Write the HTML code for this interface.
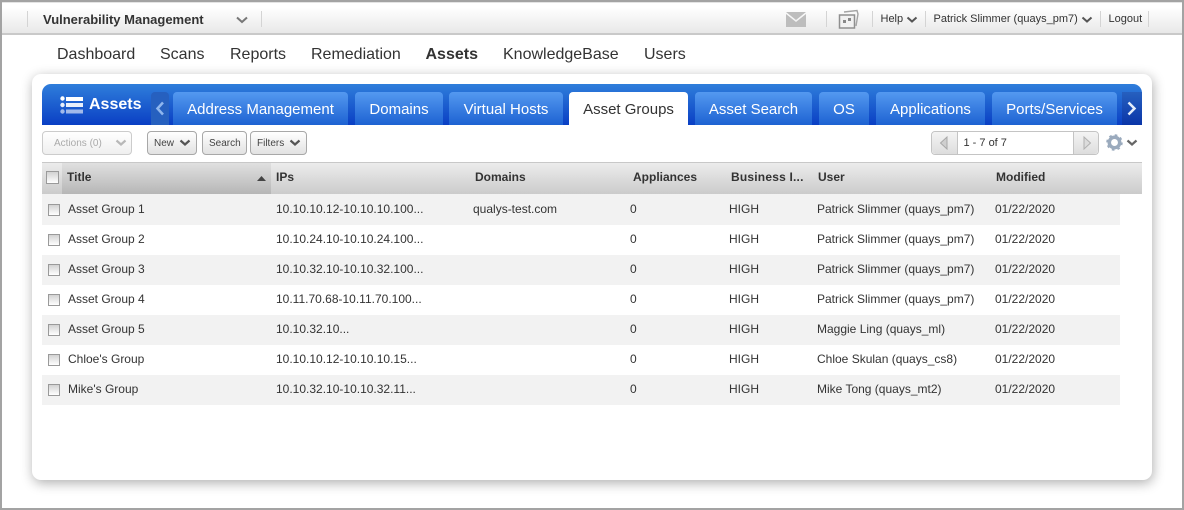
<!DOCTYPE html>
<html><head><meta charset="utf-8"><style>
html,body{margin:0;padding:0;background:#fff}
#p{position:relative;width:1184px;height:510px;overflow:hidden;background:#fff;font-family:"Liberation Sans",sans-serif;color:#333}
#p div{position:absolute;white-space:nowrap}
.frame{left:0;top:0;width:1180px;height:506px;border:2px solid #a3a3a3;z-index:9;pointer-events:none}
.top{left:2px;top:2px;width:1180px;height:31px;background:linear-gradient(#fff,#fff 15%,#e8e8e8);border-top:1px solid #e4e4e4;box-sizing:border-box}
.topb{left:2px;top:33px;width:1180px;height:2px;background:#c9c9c9}
.sep{width:1px;height:16px;top:11px;background:#d4d4d4}
.t11{font-size:11px;top:13px;color:#333;line-height:13px}
.nav{font-size:16px;top:45px;line-height:19px;color:#333}
.card{left:32px;top:74px;width:1120px;height:406px;background:#fff;border-radius:9px;box-shadow:1px 3px 12px rgba(0,0,0,.32)}
.bar{left:42px;top:84px;width:1100px;height:41px;background:linear-gradient(#2f7edb,#0a3fc4);border-radius:9px 9px 0 0}
.tab{top:92px;height:33px;background:linear-gradient(#5499f0,#1d62d2);border-radius:4px 4px 0 0;color:#fff;font-size:15px;line-height:35px;text-align:center}
.tab.on{background:#fff;color:#333}
.btn{top:131px;height:22px;border:1px solid #a8a8a8;border-radius:4px;background:linear-gradient(#fff,#e2e2e2);font-size:10px;line-height:24px;color:#444}
.hd{left:42px;top:162px;width:1100px;height:32px;background:linear-gradient(#ececec,#cbcbcb);border-top:1px solid #c8c8c8;box-sizing:border-box}
.sorted{left:62px;top:163px;width:209px;height:31px;background:linear-gradient(#e0e0e0,#b6b6b6)}
.h{top:170px;font-size:12px;font-weight:bold;line-height:14px;color:#333}
.row{left:42px;width:1078px;height:30px}
.c{font-size:12px;line-height:14px;color:#333}
.cb{left:48px;width:10px;height:10px;border:1px solid #9a9a9a;background:linear-gradient(#d2d2d2,#fff)}
</style></head><body><div id="p">
<div class="top"></div>
<div class="topb"></div>
<div class="sep" style="left:27px"></div>
<div class="sep" style="left:261px"></div>
<div style="left:43px;top:12px;font-size:13px;font-weight:bold;line-height:15px;color:#333">Vulnerability Management</div>
<svg style="position:absolute;left:236px;top:16px" width="12" height="8"><path d="M1 1.500L6 6L11 1.500" fill="none" stroke="#777" stroke-width="2"/></svg>
<svg style="position:absolute;left:786px;top:12px" width="20" height="15"><path d="M0 0H20L10 8Z" fill="#bdbdbd"/><path d="M0 2L10 10L20 2V15H0Z" fill="#bdbdbd"/></svg>
<div class="sep" style="left:826px"></div>
<svg style="position:absolute;left:838px;top:9px" width="21" height="20"><path d="M6 3L19 1.500L20 5L18 17" fill="none" stroke="#a5a5a5" stroke-width="1.400"/><rect x="1.500" y="6" width="15" height="13" fill="#f1f1f1" stroke="#8f8f8f" stroke-width="1.500"/><path d="M5 11h3v3H5zM10 9h3v3h-3z" fill="#888"/></svg>
<div class="sep" style="left:872px"></div>
<div class="t11" style="left:880.500px">Help</div>
<svg style="position:absolute;left:906px;top:16px" width="12" height="8"><path d="M1.500 1.500L6 5.500L10.500 1.500" fill="none" stroke="#555" stroke-width="2"/></svg>
<div class="sep" style="left:925px"></div>
<div class="t11" style="left:933.500px">Patrick Slimmer (quays_pm7)</div>
<svg style="position:absolute;left:1081px;top:16px" width="12" height="8"><path d="M1.500 1.500L6 5.500L10.500 1.500" fill="none" stroke="#555" stroke-width="2"/></svg>
<div class="sep" style="left:1100px"></div>
<div class="t11" style="left:1108.500px">Logout</div>
<div class="sep" style="left:1148px"></div>

<div class="nav" style="left:57px">Dashboard</div>
<div class="nav" style="left:160px">Scans</div>
<div class="nav" style="left:230px">Reports</div>
<div class="nav" style="left:311px">Remediation</div>
<div class="nav" style="left:425.500px;font-weight:bold">Assets</div>
<div class="nav" style="left:503px">KnowledgeBase</div>
<div class="nav" style="left:644px">Users</div>

<div class="card"></div>
<div class="bar"></div>
<svg style="position:absolute;left:60px;top:96px" width="24" height="20"><g fill="#fff"><circle cx="2.500" cy="2.500" r="2.200"/><circle cx="2.500" cy="9" r="2.200" opacity=".9"/><circle cx="2.500" cy="15.500" r="2.200" opacity=".6"/><rect x="6" y="1" width="17" height="4"/><rect x="6" y="7" width="17" height="4" opacity=".9"/><rect x="6" y="13.500" width="17" height="4" opacity=".6"/></g></svg>
<div style="left:89px;top:95px;color:#fff;font-size:16px;font-weight:bold;line-height:19px">Assets</div>
<div style="left:151px;top:92px;width:18px;height:33px;background:#2660bf;border-radius:4px 4px 0 0"></div>
<svg style="position:absolute;left:155px;top:101px" width="10" height="15"><path d="M8 1.500L2.500 7.500L8 13.500" fill="none" stroke="#8fb6ee" stroke-width="2.500"/></svg>
<div class="tab" style="left:173px;width:175px">Address Management</div>
<div class="tab" style="left:355px;width:88px">Domains</div>
<div class="tab" style="left:449px;width:114px">Virtual Hosts</div>
<div class="tab on" style="left:569px;width:119px">Asset Groups</div>
<div class="tab" style="left:695px;width:117px">Asset Search</div>
<div class="tab" style="left:819px;width:50px">OS</div>
<div class="tab" style="left:876px;width:109px">Applications</div>
<div class="tab" style="left:992px;width:125px">Ports/Services</div>
<div style="left:1122px;top:92px;width:20px;height:33px;background:linear-gradient(#2660bf,#0a35a8)"></div>
<svg style="position:absolute;left:1126px;top:101px" width="11" height="15"><path d="M2.500 1.500L8.500 7.500L2.500 13.500" fill="none" stroke="#e4edfa" stroke-width="2.500"/></svg>

<div class="btn" style="left:42px;width:88px;border-color:#ccc;color:#aaa;background:linear-gradient(#fff,#efefef)"><span style="margin-left:11px">Actions (0)</span></div>
<svg style="position:absolute;left:115px;top:139px" width="12" height="8"><path d="M1.500 1.500L6 5.500L10.500 1.500" fill="none" stroke="#b8b8b8" stroke-width="2.200"/></svg>
<div class="btn" style="left:147px;width:48px"><span style="margin-left:6px">New</span></div>
<svg style="position:absolute;left:179px;top:139px" width="12" height="8"><path d="M1.500 1.500L6 5.500L10.500 1.500" fill="none" stroke="#555" stroke-width="2.200"/></svg>
<div class="btn" style="left:202px;width:43px"><span style="margin-left:6px">Search</span></div>
<div class="btn" style="left:250px;width:55px"><span style="margin-left:6px">Filters</span></div>
<svg style="position:absolute;left:289px;top:139px" width="12" height="8"><path d="M1.500 1.500L6 5.500L10.500 1.500" fill="none" stroke="#555" stroke-width="2.200"/></svg>

<div style="left:931px;top:131px;width:166px;height:22px;border:1px solid #c4c4c4;border-radius:4px;background:#fff"></div>
<div style="left:932px;top:132px;width:25px;height:22px;background:linear-gradient(#f4f4f4,#ddd);border-right:1px solid #c4c4c4;border-radius:4px 0 0 4px"></div>
<div style="left:1073px;top:132px;width:24px;height:22px;background:linear-gradient(#f4f4f4,#ddd);border-left:1px solid #c4c4c4;border-radius:0 4px 4px 0"></div>
<svg style="position:absolute;left:939px;top:136px" width="10" height="14"><path d="M8 1V13L1.500 7Z" fill="#cfcfcf" stroke="#a8a8a8"/></svg>
<svg style="position:absolute;left:1082px;top:136px" width="10" height="14"><path d="M2 1V13L8.500 7Z" fill="#dcdcdc" stroke="#b0b0b0"/></svg>
<div style="left:963.500px;top:137px;font-size:11px;line-height:13px;color:#333">1 - 7 of 7</div>
<svg style="position:absolute;left:1106px;top:134px" width="17" height="17"><circle cx="8.500" cy="8.500" r="5.200" fill="none" stroke="#9aaabd" stroke-width="3.500"/><circle cx="8.500" cy="8.500" r="7" fill="none" stroke="#9aaabd" stroke-width="2.500" stroke-dasharray="2.500 3"/></svg>
<svg style="position:absolute;left:1126px;top:139px" width="12" height="8"><path d="M1.500 1.500L6 5.500L10.500 1.500" fill="none" stroke="#666" stroke-width="2.200"/></svg>

<div class="hd"></div>
<div class="sorted"></div>
<div class="cb" style="top:171px;left:46px;width:11px;height:11px"></div>
<div class="h" style="left:67px">Title</div>
<svg style="position:absolute;left:256px;top:175px" width="12" height="7"><path d="M1 6L5.500 1L10 6Z" fill="#444"/></svg>
<div class="h" style="left:276px">IPs</div>
<div class="h" style="left:475px">Domains</div>
<div class="h" style="left:633px">Appliances</div>
<div class="h" style="left:731px;letter-spacing:.2px">Business I...</div>
<div class="h" style="left:818px">User</div>
<div class="h" style="left:996px">Modified</div>

<div class="row" style="top:194px;height:31px;background:#f2f2f2"></div>
<div class="row" style="top:255px;background:#f2f2f2"></div>
<div class="row" style="top:315px;background:#f2f2f2"></div>
<div class="row" style="top:375px;background:#f2f2f2"></div>

<div class="cb" style="top:204px"></div><div class="c" style="left:68px;top:202px">Asset Group 1</div><div class="c" style="left:276px;top:202px">10.10.10.12-10.10.10.100...</div><div class="c" style="left:473px;top:202px">qualys-test.com</div><div class="c" style="left:630px;top:202px">0</div><div class="c" style="left:729px;top:202px">HIGH</div><div class="c" style="left:817px;top:202px">Patrick Slimmer (quays_pm7)</div><div class="c" style="left:995px;top:202px">01/22/2020</div>
<div class="cb" style="top:234px"></div><div class="c" style="left:68px;top:232px">Asset Group 2</div><div class="c" style="left:276px;top:232px">10.10.24.10-10.10.24.100...</div><div class="c" style="left:630px;top:232px">0</div><div class="c" style="left:729px;top:232px">HIGH</div><div class="c" style="left:817px;top:232px">Patrick Slimmer (quays_pm7)</div><div class="c" style="left:995px;top:232px">01/22/2020</div>
<div class="cb" style="top:264px"></div><div class="c" style="left:68px;top:262px">Asset Group 3</div><div class="c" style="left:276px;top:262px">10.10.32.10-10.10.32.100...</div><div class="c" style="left:630px;top:262px">0</div><div class="c" style="left:729px;top:262px">HIGH</div><div class="c" style="left:817px;top:262px">Patrick Slimmer (quays_pm7)</div><div class="c" style="left:995px;top:262px">01/22/2020</div>
<div class="cb" style="top:294px"></div><div class="c" style="left:68px;top:292px">Asset Group 4</div><div class="c" style="left:276px;top:292px">10.11.70.68-10.11.70.100...</div><div class="c" style="left:630px;top:292px">0</div><div class="c" style="left:729px;top:292px">HIGH</div><div class="c" style="left:817px;top:292px">Patrick Slimmer (quays_pm7)</div><div class="c" style="left:995px;top:292px">01/22/2020</div>
<div class="cb" style="top:324px"></div><div class="c" style="left:68px;top:322px">Asset Group 5</div><div class="c" style="left:276px;top:322px">10.10.32.10...</div><div class="c" style="left:630px;top:322px">0</div><div class="c" style="left:729px;top:322px">HIGH</div><div class="c" style="left:817px;top:322px">Maggie Ling (quays_ml)</div><div class="c" style="left:995px;top:322px">01/22/2020</div>
<div class="cb" style="top:354px"></div><div class="c" style="left:68px;top:352px">Chloe's Group</div><div class="c" style="left:276px;top:352px">10.10.10.12-10.10.10.15...</div><div class="c" style="left:630px;top:352px">0</div><div class="c" style="left:729px;top:352px">HIGH</div><div class="c" style="left:817px;top:352px">Chloe Skulan (quays_cs8)</div><div class="c" style="left:995px;top:352px">01/22/2020</div>
<div class="cb" style="top:384px"></div><div class="c" style="left:68px;top:382px">Mike's Group</div><div class="c" style="left:276px;top:382px">10.10.32.10-10.10.32.11...</div><div class="c" style="left:630px;top:382px">0</div><div class="c" style="left:729px;top:382px">HIGH</div><div class="c" style="left:817px;top:382px">Mike Tong (quays_mt2)</div><div class="c" style="left:995px;top:382px">01/22/2020</div>
<div class="frame"></div>
</div></body></html>
